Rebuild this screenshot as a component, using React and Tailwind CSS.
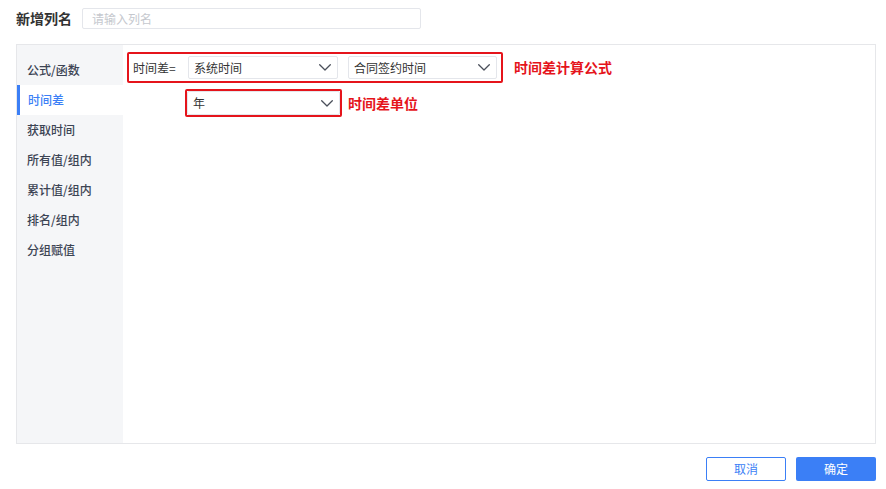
const menuItems = ['公式/函数', '时间差', '获取时间', '所有值/组内', '累计值/组内', '排名/组内', '分组赋值'];

const Chevron = () => (
  <svg width="12" height="7" viewBox="0 0 12 7" fill="none">
    <path d="M0.7 0.7 L6 6 L11.3 0.7" stroke="#4a4f5a" strokeWidth="1.3" strokeLinecap="round" strokeLinejoin="round" />
  </svg>
);

const Select = ({ value, className }) => (
  <div
    className={`flex items-center justify-between h-[23px] border border-[#e4e6eb] rounded-[2px] bg-white pl-[5px] pr-[6px] text-[12px] text-[#333] ${className}`}
  >
    <span>{value}</span>
    <Chevron />
  </div>
);

const App = () => {
  return (
    <div
      className="w-[886px] h-[489px] bg-white px-4 pt-[8px]"
      style={{ fontFamily: '"Noto Sans CJK SC", "Noto Sans", sans-serif' }}
    >
      {/* Header */}
      <div className="flex items-center h-[21px]">
        <span className="text-[14px] font-bold text-[#333] w-[66px]">新增列名</span>
        <div className="w-[339px] h-[21px] border border-[#e4e6eb] rounded-[2px] pl-[9px] flex items-center text-[12px] text-[#c5c8ce]">
          请输入列名
        </div>
      </div>

      {/* Main panel */}
      <div className="mt-[15px] h-[400px] w-[860px] border border-[#e6e7ea] flex">
        <div className="w-[106px] bg-[#f5f6f8] pt-[10px]">
          {menuItems.map((item) => {
            const active = item === '时间差';
            return (
              <div
                key={item}
                className={
                  active
                    ? 'h-[30px] flex items-center pl-[8px] border-l-[3px] border-[#3b7ff6] bg-white text-[12px] font-medium text-[#3b7ff6]'
                    : 'h-[30px] flex items-center pl-[10px] text-[12px] font-medium text-[#3c4454]'
                }
              >
                {item}
              </div>
            );
          })}
        </div>

        <div className="flex-1 pl-[4px] pt-[7px]">
          {/* Formula row */}
          <div className="flex items-center">
            <div className="flex items-center w-[376px] h-[31px] border-2 border-[#e5141b] rounded-[2px] pl-[4px]">
              <span className="w-[55px] text-[12px] text-[#333]">时间差=</span>
              <Select value="系统时间" className="w-[150px]" />
              <Select value="合同签约时间" className="w-[149px] ml-[10px]" />
            </div>
            <span className="ml-[11px] text-[14px] font-bold text-[#e5141b]">时间差计算公式</span>
          </div>

          {/* Unit row */}
          <div className="flex items-center mt-[6px] ml-[58px]">
            <div className="w-[157px] h-[28px] border-2 border-[#e5141b] rounded-[2px] flex items-center">
              <Select value="年" className="w-full h-[24px]" />
            </div>
            <span className="ml-[6px] text-[14px] font-bold text-[#e5141b]">时间差单位</span>
          </div>
        </div>
      </div>

      {/* Footer */}
      <div className="flex justify-end gap-[10px] mt-[13px] w-[860px]">
        <button className="w-[80px] h-[24px] border border-[#3b7ff6] rounded-[2px] bg-white text-[12px] text-[#3b7ff6]">
          取消
        </button>
        <button className="w-[80px] h-[24px] rounded-[2px] bg-[#3b7ff6] text-[12px] text-white">
          确定
        </button>
      </div>
    </div>
  );
};

export default App;
